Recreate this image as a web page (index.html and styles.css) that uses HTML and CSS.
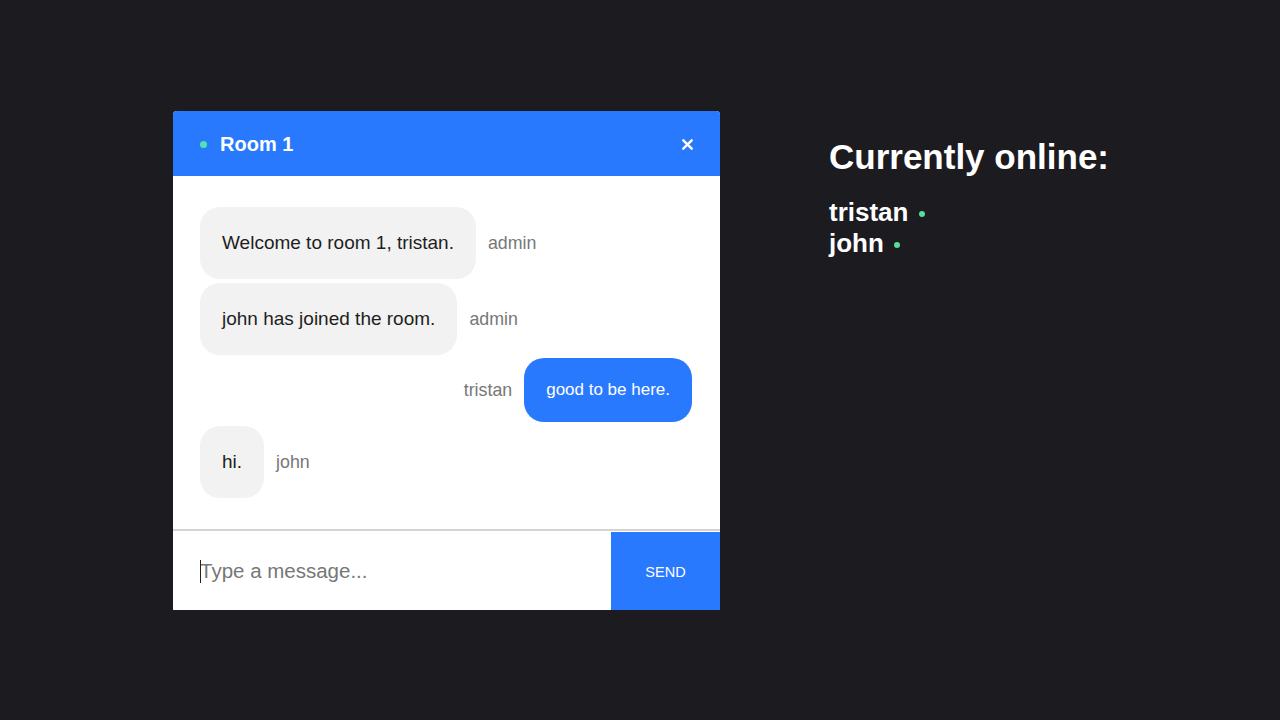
FILE: index.html
```html
<!DOCTYPE html>
<html lang="en">
<head>
<meta charset="utf-8">
<title>Chat</title>
<link rel="stylesheet" href="styles.css">
</head>
<body>
<main class="page">
  <section class="chat">
    <header class="chat-header">
      <span class="status-dot"></span>
      <h1 class="room-title">Room 1</h1>
      <button class="close-btn" aria-label="Close">
        <svg width="11" height="11" viewBox="0 0 11 11"><path d="M1.3 1.3 L9.7 9.7 M9.7 1.3 L1.3 9.7" stroke="#fff" stroke-width="2.4" stroke-linecap="round"/></svg>
      </button>
    </header>
    <div class="messages">
      <div class="msg">
        <div class="bubble">Welcome to room 1, tristan.</div>
        <span class="sender">admin</span>
      </div>
      <div class="msg">
        <div class="bubble">john has joined the room.</div>
        <span class="sender">admin</span>
      </div>
      <div class="msg msg-own">
        <span class="sender">tristan</span>
        <div class="bubble bubble-own">good to be here.</div>
      </div>
      <div class="msg">
        <div class="bubble">hi.</div>
        <span class="sender">john</span>
      </div>
    </div>
    <form class="composer">
      <div class="input-wrap">
        <span class="caret"></span>
        <input class="msg-input" type="text" placeholder="Type a message...">
      </div>
      <button class="send-btn" type="button">SEND</button>
    </form>
  </section>
  <aside class="online">
    <h2 class="online-title">Currently online:</h2>
    <ul class="online-list">
      <li>tristan <span class="online-dot"></span></li>
      <li>john <span class="online-dot"></span></li>
    </ul>
  </aside>
</main>
</body>
</html>
```
FILE: styles.css
```css
* { box-sizing: border-box; }
html, body {
  margin: 0;
  padding: 0;
  background: #1c1b20;
  font-family: "Liberation Sans", Arial, Helvetica, sans-serif;
}
.page {
  display: flex;
  align-items: flex-start;
  padding: 111px 0 0 173px;
  gap: 109px;
  height: 720px;
}
.chat {
  width: 547px;
  background: #fff;
  border-radius: 4px 4px 0 0;
  overflow: hidden;
  display: flex;
  flex-direction: column;
}
.chat-header {
  height: 65px;
  background: #2979ff;
  display: flex;
  align-items: center;
  padding: 1px 27px 0;
}
.status-dot {
  width: 7px;
  height: 7px;
  border-radius: 50%;
  background: #4fe3b0;
  margin-right: 13px;
}
.room-title {
  margin: 0;
  color: #fff;
  font-size: 20px;
  font-weight: 700;
  flex: 1;
}
.close-btn {
  background: none;
  border: 0;
  padding: 0;
  margin-right: 0;
  display: flex;
  align-items: center;
  cursor: pointer;
}
.messages {
  height: 353px;
  padding: 31px 28px 0 27px;
  display: flex;
  flex-direction: column;
  gap: 4px;
}
.msg {
  display: flex;
  align-items: center;
  gap: 12px;
}
.msg-own {
  justify-content: flex-end;
}
.bubble {
  background: #f2f2f2;
  color: #1e1e1e;
  font-size: 19px;
  line-height: 24px;
  padding: 24px 22px;
  border-radius: 20px;
}
.bubble-own {
  background: #2979ff;
  color: #fff;
  font-size: 17px;
  line-height: 22px;
  padding: 21px 22px;
}
.msg-own .bubble-own {
  margin-top: -1px;
}
.sender {
  color: #777;
  font-size: 17.8px;
}
.composer {
  margin: 0;
  border-top: 2px solid #d4d4d4;
  display: flex;
  height: 81px;
}
.input-wrap {
  flex: 1;
  position: relative;
  display: flex;
  align-items: center;
}
.msg-input {
  width: 100%;
  height: 100%;
  border: 0;
  outline: none;
  padding: 1px 0 0 27px;
  font-family: inherit;
  font-size: 20.5px;
  color: #222;
  background: #fff;
}
.msg-input::placeholder {
  color: #777;
}
.caret {
  position: absolute;
  left: 27px;
  top: 29px;
  width: 1px;
  height: 23px;
  background: #222;
}
.send-btn {
  width: 109px;
  border: 0;
  border-top: 1px solid #fff;
  background: #2979ff;
  color: #fff;
  font-family: inherit;
  font-size: 14.5px;
  padding: 1px 0 0;
  cursor: pointer;
}
.online {
  color: #fff;
}
.online-title {
  margin: 26px 0 20px;
  font-size: 35px;
  line-height: 40px;
  font-weight: 700;
}
.online-list {
  list-style: none;
  margin: 0;
  padding: 0;
  font-size: 26px;
  line-height: 31px;
  font-weight: 700;
}
.online-dot {
  display: inline-block;
  width: 6px;
  height: 6px;
  border-radius: 50%;
  background: #56dc9e;
  vertical-align: middle;
  margin-left: 3px;
}
```
